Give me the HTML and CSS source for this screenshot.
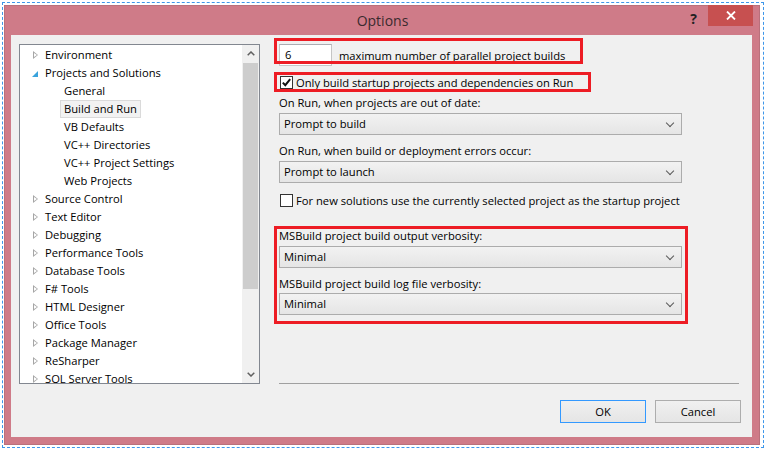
FILE: index.html
```html
<!DOCTYPE html>
<html lang="en">
<head>
  <meta charset="UTF-8">
  <title>Options</title>
  <link rel="stylesheet" href="styles.css">
</head>
<body>
  <div class="surface">
    <div class="window">
      <div class="titlebar">
        <span></span>
        <span class="title">Options</span>
        <div class="caption-buttons">
          <span class="help">?</span>
          <span class="close">
            <svg width="10" height="9" viewBox="0 0 10 9"><path d="M1 0.5 L9 8.5 M9 0.5 L1 8.5" stroke="#fff" stroke-width="1.8" fill="none"/></svg>
          </span>
        </div>
      </div>

      <div class="client">
        <div class="main">
          <div class="tree">
            <ul class="tree-list">
              <li class="node"><span class="twisty closed"></span>Environment</li>
              <li class="node"><span class="twisty open"></span>Projects and Solutions</li>
              <li class="leaf"><span class="leaf-label">General</span></li>
              <li class="leaf"><span class="leaf-label selected">Build and Run</span></li>
              <li class="leaf"><span class="leaf-label">VB Defaults</span></li>
              <li class="leaf"><span class="leaf-label">VC++ Directories</span></li>
              <li class="leaf"><span class="leaf-label">VC++ Project Settings</span></li>
              <li class="leaf"><span class="leaf-label">Web Projects</span></li>
              <li class="node"><span class="twisty closed"></span>Source Control</li>
              <li class="node"><span class="twisty closed"></span>Text Editor</li>
              <li class="node"><span class="twisty closed"></span>Debugging</li>
              <li class="node"><span class="twisty closed"></span>Performance Tools</li>
              <li class="node"><span class="twisty closed"></span>Database Tools</li>
              <li class="node"><span class="twisty closed"></span>F# Tools</li>
              <li class="node"><span class="twisty closed"></span>HTML Designer</li>
              <li class="node"><span class="twisty closed"></span>Office Tools</li>
              <li class="node"><span class="twisty closed"></span>Package Manager</li>
              <li class="node"><span class="twisty closed"></span>ReSharper</li>
              <li class="node"><span class="twisty closed"></span>SQL Server Tools</li>
            </ul>
            <div class="scrollbar">
              <div class="sb-button">
                <svg width="8" height="5" viewBox="0 0 8 5"><path d="M0.7 4.3 L4 1 L7.3 4.3" stroke="#606060" stroke-width="1.5" fill="none"/></svg>
              </div>
              <div class="sb-track"><div class="sb-thumb"></div></div>
              <div class="sb-button">
                <svg width="8" height="5" viewBox="0 0 8 5"><path d="M0.7 0.7 L4 4 L7.3 0.7" stroke="#606060" stroke-width="1.5" fill="none"/></svg>
              </div>
            </div>
          </div>

          <div class="settings">
            <div class="threads-row">
              <div class="textbox">6</div>
              <span class="threads-label">maximum number of parallel project builds</span>
            </div>

            <div class="check-row first-check">
              <span class="checkbox">
                <svg width="11" height="11" viewBox="0 0 11 11"><path d="M1.8 5.6 L4.3 8.2 L9.2 2.2" stroke="#111" stroke-width="2" fill="none"/></svg>
              </span>
              <span>Only build startup projects and dependencies on Run</span>
            </div>

            <div class="field-label gap-small">On Run, when projects are out of date:</div>
            <div class="dropdown">Prompt to build<span class="chevron"></span></div>

            <div class="field-label gap-mid">On Run, when build or deployment errors occur:</div>
            <div class="dropdown">Prompt to launch<span class="chevron"></span></div>

            <div class="check-row second-check">
              <span class="checkbox"></span>
              <span>For new solutions use the currently selected project as the startup project</span>
            </div>

            <div class="field-label gap-large">MSBuild project build output verbosity:</div>
            <div class="dropdown">Minimal<span class="chevron"></span></div>

            <div class="field-label gap-last">MSBuild project build log file verbosity:</div>
            <div class="dropdown tight">Minimal<span class="chevron"></span></div>

            <div class="separator"></div>

            <div class="mark mark-threads"></div>
            <div class="mark mark-startup"></div>
            <div class="mark mark-msbuild"></div>
          </div>
        </div>

        <div class="actions">
          <button class="btn btn-default">OK</button>
          <button class="btn">Cancel</button>
        </div>
      </div>
    </div>
  </div>
</body>
</html>
```

FILE: styles.css
```css
* {
  box-sizing: border-box;
}

body {
  margin: 0;
  background: #fff;
  font-family: 'Open Sans', 'Noto Sans', sans-serif;
  font-size: 11.2px;
  color: #000;
}

.surface {
  margin: 2px;
  width: 762px;
  height: 446px;
  padding: 2px 0 0 1px;
  border: 1px dashed #3d97ea;
}

.window {
  width: 756px;
  height: 440px;
  background: #cf7b88;
  border: 1px solid #b9707c;
  padding: 0 7px 7px 6px;
  display: flex;
  flex-direction: column;
}

/* title bar */
.titlebar {
  height: 29px;
  flex: none;
  display: grid;
  grid-template-columns: 1fr auto 1fr;
  align-items: start;
}

.title {
  font-size: 14px;
  line-height: 29px;
  color: #3a2a2e;
  margin-left: 2px;
}

.caption-buttons {
  display: flex;
  justify-content: flex-end;
  align-items: flex-start;
  margin-right: -1px;
}

.help {
  font-size: 14px;
  font-weight: bold;
  color: #222;
  line-height: 14px;
  margin-top: 6px;
  margin-right: 11px;
}

.close {
  width: 45px;
  height: 21px;
  margin-top: -1px;
  background: #c75050;
  display: flex;
  align-items: center;
  justify-content: center;
}

/* client area */
.client {
  flex: 1;
  background: #f0f0f0;
  padding: 9px 13px 0 8px;
  display: flex;
  flex-direction: column;
}

.main {
  display: flex;
  gap: 19px;
  height: 340px;
}

/* tree */
.tree {
  width: 241px;
  height: 340px;
  background: #fff;
  border: 1px solid #828790;
  display: flex;
  overflow: hidden;
}

.tree-list {
  flex: 1;
  list-style: none;
  margin: 0;
  padding: 1px 0 0;
  overflow: hidden;
}

.tree-list li {
  height: 18px;
  line-height: 18px;
  display: flex;
  align-items: center;
  white-space: nowrap;
}

.node {
  padding-left: 12px;
}

.leaf {
  padding-left: 40px;
}

.leaf-label {
  padding: 0 3px;
  border: 1px solid transparent;
  line-height: 16px;
}

.leaf-label.selected {
  background: #f2f2f2;
  border-color: #dadada;
}

.twisty {
  width: 13px;
  height: 8px;
  flex: none;
  position: relative;
}

.twisty.closed::before {
  content: "";
  position: absolute;
  left: 1px;
  top: 0;
  border-style: solid;
  border-width: 4px 0 4px 5px;
  border-color: transparent transparent transparent #a6a6a6;
}

.twisty.closed::after {
  content: "";
  position: absolute;
  left: 2px;
  top: 1.5px;
  border-style: solid;
  border-width: 2.5px 0 2.5px 3px;
  border-color: transparent transparent transparent #fff;
}

.twisty.open::before {
  content: "";
  position: absolute;
  left: 0;
  top: 2px;
  border-style: solid;
  border-width: 0 0 6px 6px;
  border-color: transparent transparent #3aa3dc transparent;
}

.scrollbar {
  width: 17px;
  flex: none;
  background: #f0f0f0;
  display: flex;
  flex-direction: column;
}

.sb-button {
  height: 17px;
  flex: none;
  display: flex;
  align-items: center;
  justify-content: center;
}

.sb-track {
  flex: 1;
  padding: 1px 1px 0;
}

.sb-thumb {
  height: 226px;
  background: #cdcdcd;
}

/* settings */
.settings {
  width: 460px;
  position: relative;
  display: flex;
  flex-direction: column;
}

.threads-row {
  height: 22px;
  display: flex;
  align-items: center;
}

.textbox {
  width: 53px;
  height: 22px;
  background: #fff;
  border: 1px solid #c5c5c5;
  border-top-color: #abadb3;
  padding-left: 5px;
  line-height: 20px;
}

.threads-label {
  margin-left: 7px;
}

.check-row {
  height: 18px;
  display: flex;
  align-items: center;
  white-space: nowrap;
}

.first-check {
  margin-top: 7px;
}

.second-check {
  margin-top: 8px;
}

.checkbox {
  width: 13px;
  height: 13px;
  margin-left: 1px;
  margin-right: 3px;
  background: #fff;
  border: 1px solid #333;
  display: flex;
  align-items: center;
  justify-content: center;
  flex: none;
}

.field-label {
  height: 16px;
  line-height: 16px;
  white-space: nowrap;
}

.gap-small {
  margin-top: 4px;
}

.gap-mid {
  margin-top: 8px;
}

.gap-large {
  margin-top: 19px;
}

.gap-last {
  margin-top: 8px;
}

.dropdown {
  margin-top: 2px;
  width: 403px;
  height: 22px;
  line-height: 20px;
  padding-left: 4px;
  border: 1px solid #acacac;
  background: linear-gradient(#f2f2f2, #e5e5e5);
  position: relative;
}

.dropdown.tight {
  margin-top: 1px;
}

.chevron {
  position: absolute;
  right: 8px;
  top: 6px;
  width: 6px;
  height: 6px;
  border-right: 1.6px solid #5a5a5a;
  border-bottom: 1.6px solid #5a5a5a;
  transform: rotate(45deg);
}

.separator {
  margin-top: auto;
  height: 1px;
  background: #a0a0a0;
}

/* red annotation frames */
.mark {
  position: absolute;
  border: 3px solid #ed1c24;
  pointer-events: none;
}

.mark-threads {
  left: -5px;
  top: -6px;
  width: 309px;
  height: 26px;
}

.mark-startup {
  left: -5px;
  top: 28px;
  width: 317px;
  height: 20px;
}

.mark-msbuild {
  left: -5px;
  top: 182px;
  width: 414px;
  height: 98px;
}

/* buttons */
.actions {
  display: flex;
  justify-content: flex-end;
  gap: 9px;
  margin-top: 16px;
  margin-right: -2px;
}

.btn {
  width: 86px;
  height: 23px;
  font-family: inherit;
  font-size: inherit;
  color: #000;
  background: linear-gradient(#f0f0f0, #e5e5e5);
  border: 1px solid #adadad;
  padding: 0;
}

.btn-default {
  border-color: #3399ff;
}
```
